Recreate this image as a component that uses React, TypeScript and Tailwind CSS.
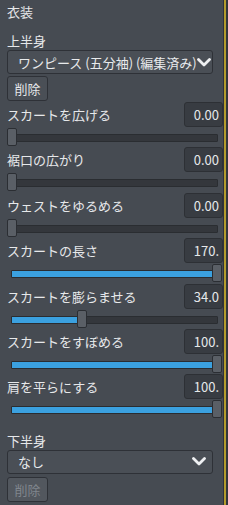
const font = { fontFamily: '"Noto Sans CJK JP", "Noto Sans", sans-serif' }

type Slider = { label: string; value: number; text: string }

const sliders: Slider[] = [
  { label: 'スカートを広げる', value: 0, text: '0.00' },
  { label: '裾口の広がり', value: 0, text: '0.00' },
  { label: 'ウェストをゆるめる', value: 0, text: '0.00' },
  { label: 'スカートの長さ', value: 1, text: '170.' },
  { label: 'スカートを膨らませる', value: 0.34, text: '34.0' },
  { label: 'スカートをすぼめる', value: 1, text: '100.' },
  { label: '肩を平らにする', value: 1, text: '100.' },
]

function Chevron() {
  return (
    <svg width="14" height="9" viewBox="0 0 14 9" className="shrink-0">
      <polyline points="1.5,1.5 7,7 12.5,1.5" fill="none" stroke="#eef0f2" strokeWidth="2.8" strokeLinecap="round" strokeLinejoin="round" />
    </svg>
  )
}

function Dropdown({ text }: { text: string }) {
  return (
    <div className="flex h-[24px] w-[206px] items-center justify-between rounded-[3px] border border-[#2e3137] bg-[#4a4f56] pl-[10px] pr-[6px]">
      <span className="whitespace-nowrap text-[13px] leading-none text-[#e8eaec]">{text}</span>
      <Chevron />
    </div>
  )
}

function SliderRow({ s }: { s: Slider }) {
  const left = 205 * s.value
  return (
    <div className="flex h-[45.4px] flex-col">
      <div className="flex h-[25px] items-center justify-between">
        <span className="text-[13px] leading-none text-[#e6e8ea]">{s.label}</span>
        <div className="flex h-[25px] w-[39px] items-center justify-end rounded-[3px] border border-[#2d3035] bg-[#383c42] pr-[3px] text-[13px] leading-none text-[#e6e8ea]">
          {s.text}
        </div>
      </div>
      <div className="relative mt-[1px] h-[18px] w-[215px]">
        <div className="absolute left-[4px] right-[4px] top-[6px] h-[8px] rounded-[1px] border border-[#2a2d31] bg-[#34373c]">
          <div className="h-full bg-[#3ba1e0]" style={{ width: Math.max(0, left) }} />
        </div>
        <div
          className="absolute top-0 h-[18px] w-[10px] rounded-[2px] border border-[#2b2e33] bg-[#5a5f66]"
          style={{ left }}
        />
      </div>
    </div>
  )
}

export default function App() {
  return (
    <div className="flex h-[505px] w-[228px] overflow-hidden bg-[#464b52]" style={font}>
      <div className="flex w-[223px] flex-col pl-[7px]">
        <div className="mt-[3px] h-[18px] text-[13px] leading-[18px] text-[#e6e8ea]">衣装</div>
        <div className="mt-[11px] h-[18px] text-[13px] leading-[18px] text-[#e6e8ea]">上半身</div>
        <Dropdown text="ワンピース (五分袖) (編集済み)" />
        <button className="mt-[2px] flex h-[25px] w-[41px] items-center justify-center rounded-[3px] border border-[#2e3137] bg-[#4a4f56] text-[13px] leading-none text-[#e6e8ea]">
          削除
        </button>
        <div className="mt-[1px] flex flex-col">
          {sliders.map((s) => (
            <SliderRow key={s.label} s={s} />
          ))}
        </div>
        <div className="mt-[12px] h-[18px] text-[13px] leading-[18px] text-[#e6e8ea]">下半身</div>
        <Dropdown text="なし" />
        <button className="mt-[3px] flex h-[25px] w-[41px] items-center justify-center rounded-[3px] border border-[#2e3137] bg-[#52575e] text-[13px] leading-none text-[#80868d]">
          削除
        </button>
      </div>
      <div className="w-[1px] bg-[#30333a]" />
      <div className="w-[2px] bg-[#b39b2c]" />
      <div className="w-[2px] bg-[#33363c]" />
    </div>
  )
}
